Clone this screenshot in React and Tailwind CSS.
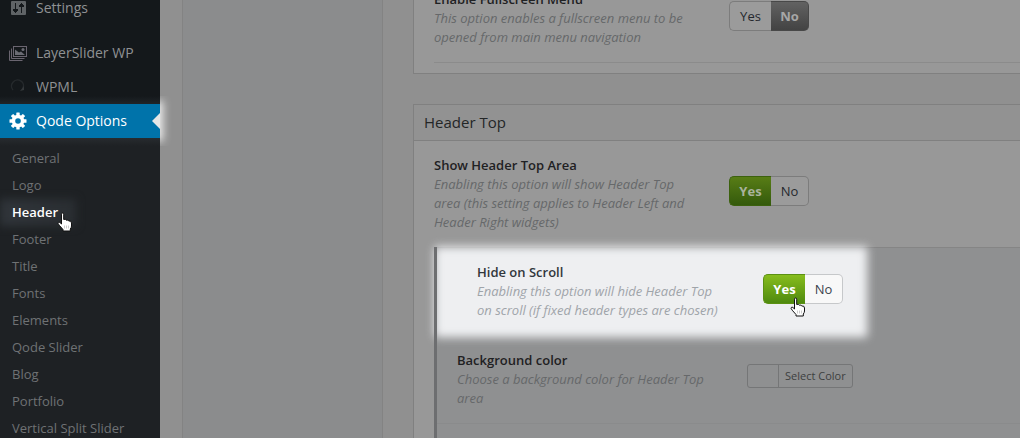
// src/App.jsx
import { useState } from 'react';

const SUB_ITEMS = [
  'General',
  'Logo',
  'Header',
  'Footer',
  'Title',
  'Fonts',
  'Elements',
  'Qode Slider',
  'Blog',
  'Portfolio',
  'Vertical Split Slider',
];

const SlidersIcon = () => (
  <svg width="18" height="18" viewBox="0 0 18 18" aria-hidden="true">
    <rect x="2" y="2" width="15" height="14" rx="1" fill="#5f6366" />
    <g fill="#14181b">
      <rect x="6" y="4" width="1" height="10" />
      <rect x="4" y="10" width="5" height="2" />
      <rect x="5" y="12" width="3" height="1" />
      <rect x="12" y="4" width="1" height="10" />
      <rect x="10" y="6" width="5" height="2" />
      <rect x="11" y="5" width="3" height="1" />
    </g>
  </svg>
);

const LayersIcon = () => (
  <svg width="18" height="18" viewBox="0 0 18 18" fill="none" stroke="#6a6570" aria-hidden="true">
    <rect x="4.5" y="2.5" width="13" height="10" />
    <path d="M2.500 4.500V14.500H15.500M.5 6.500V16.500H13.500" />
    <path d="M6 11V5.500L10 8.500L12 7.500L16 11Z" fill="#6a6b73" stroke="none" />
    <circle cx="14" cy="5.500" r="1.500" fill="#6a6b73" stroke="none" />
  </svg>
);

const WpmlIcon = () => (
  <svg width="18" height="18" viewBox="0 0 18 18" fill="none" aria-hidden="true">
    <path d="M4 12A6 6 0 1 1 14 10.500" stroke="#25292c" strokeWidth="1.500" />
    <path d="M11 13L15 8V12Z" fill="#34383b" />
  </svg>
);

const GearIcon = () => (
  <svg width="18" height="18" viewBox="0 0 18 18" aria-hidden="true">
    <g fill="#fff">
      <rect x="7.300" y="0.500" width="3.400" height="17" rx="0.500" />
      <rect x="7.300" y="0.500" width="3.400" height="17" rx="0.500" transform="rotate(45 9 9)" />
      <rect x="7.300" y="0.500" width="3.400" height="17" rx="0.500" transform="rotate(90 9 9)" />
      <rect x="7.300" y="0.500" width="3.400" height="17" rx="0.500" transform="rotate(135 9 9)" />
      <circle cx="9" cy="9" r="6.300" />
    </g>
    <circle cx="9" cy="9" r="2.800" fill="#0073aa" />
  </svg>
);

const HandCursor = ({ className }) => (
  <svg className={className} width="16" height="20" viewBox="0 0 16 20" aria-hidden="true">
    <path
      d="M4.500 12V2.200Q4.500 1 5.600 1T6.700 2.200V7.500Q8.800 6.700 9.200 8.200Q11.200 7.500 11.700 9Q14.500 8.500 14.500 11V14Q14.500 15.500 13.300 17V19H6V17.500L2.200 13.200Q.3 11 1.500 10.300T4.500 12Z"
      fill="#fff"
      stroke="#111"
    />
    <path d="M7.500 13.500V16.500M9.500 13.500V16.500M11.500 13.500V16.500" stroke="#ccc" />
  </svg>
);

const MENU = [
  { label: 'LayerSlider WP', Icon: LayersIcon },
  { label: 'WPML', Icon: WpmlIcon },
];

const MenuLink = ({ label, Icon }) => (
  <a href="#" className="flex h-[34px] items-center gap-[9px] pl-[9px] text-sm text-[#8f9193]">
    <Icon />
    {label}
  </a>
);

const Sidebar = () => (
  <nav className="relative z-10 w-40 shrink-0 bg-[#1e2124]">
    <div className="bg-[#14181b]">
      <div className="-mt-[9px] mb-[11px]">
        <MenuLink label="Settings" Icon={SlidersIcon} />
      </div>
      {MENU.map(item => (
        <MenuLink key={item.label} {...item} />
      ))}
    </div>

    {/* Active section, lit up */}
    <div className="relative">
      <div className="absolute -inset-y-2 inset-x-0 bg-linear-to-b from-transparent via-[#3a4045] to-transparent" />
      <div className="absolute -inset-y-2 left-full w-4 overflow-hidden py-2">
        <div className="-ml-2 h-full w-2 bg-white shadow-[0_0_8px_3px_#eee]" />
      </div>
      <a href="#" className="relative flex h-[34px] items-center gap-[9px] bg-[#0073aa] pl-[9px] text-sm text-white">
        <GearIcon />
        Qode Options
        <svg className="ml-auto" width="8" height="16" viewBox="0 0 8 16" aria-hidden="true">
          <path d="M8 0V16L0 8Z" fill="#e6e6e6" />
        </svg>
      </a>
    </div>

    <ul className="pt-[7px] text-[13px] leading-[27px]">
      {SUB_ITEMS.map(label => (
        <li key={label}>
          {label === 'Header' ? (
            <a href="#" className="relative block pl-3 font-semibold text-white">
              <span className="absolute inset-y-0 left-0 w-[76px] bg-linear-to-r from-[#30353a] to-[#2a2e32] blur-[4px]" />
              <span className="relative">{label}</span>
              <HandCursor className="absolute top-[13px] left-[57px]" />
            </a>
          ) : (
            <a href="#" className="block pl-3 text-[#6f7274]">{label}</a>
          )}
        </li>
      ))}
    </ul>
  </nav>
);

const YesNo = ({ name, initial, lit }) => {
  const [value, setValue] = useState(initial);
  const idle = lit
    ? 'border-[#c6c8ca] bg-[#f8f8f8] text-[#3c434e]'
    : 'border-[#7c7c7c] bg-[#9b9b9b] text-[#25282e]';
  const yesOn = lit
    ? 'border-[#5b9112] bg-linear-to-b from-[#87bd1c] to-[#4f8a0f] font-bold text-white'
    : 'border-[#3c610e] bg-linear-to-b from-[#587d16] to-[#345a0c] font-bold text-[#a9b39d]';
  const noOn = 'border-[#484848] bg-linear-to-b from-[#626262] to-[#434343] font-bold text-[#a6a6a6]';

  return (
    <div role="group" aria-label={name} className="flex h-[30px] text-[13px]">
      <button
        onClick={() => setValue('yes')}
        aria-pressed={value === 'yes'}
        className={`w-[42px] rounded-l-[5px] border border-r-0 pt-0.5 ${value === 'yes' ? yesOn : idle}`}
      >
        Yes
      </button>
      <button
        onClick={() => setValue('no')}
        aria-pressed={value === 'no'}
        className={`w-[38px] rounded-r-[5px] border border-l-0 pt-0.5 ${value === 'no' ? noOn : idle}`}
      >
        No
      </button>
    </div>
  );
};

const OptionText = ({ title, text, lit }) => (
  <div className="w-[252px] shrink-0 text-[13px] leading-[19px]">
    <h4 className={`font-semibold ${lit ? 'text-[#32373c]' : 'text-[#1f2123]'}`}>{title}</h4>
    <p className={`italic ${lit ? 'text-[#9fa4a9]' : 'text-[#66686a]'}`}>{text}</p>
  </div>
);

const App = () => (
  <div
    className="flex h-screen overflow-hidden bg-[#909090]"
    style={{ fontFamily: '"Open Sans", "Noto Sans", sans-serif' }}
  >
    <Sidebar />

    <div className="ml-[22px] w-[201px] shrink-0 border-x border-[#838383] bg-[#8b8c8d]" />

    <main className="ml-[30px] min-w-0 flex-1">
      {/* Tail of the previous panel */}
      <section className="border-b border-l border-[#808080] bg-[#989898] pb-[10px] pl-5">
        <div className="-mt-[10px] flex gap-[43px] border-b border-[#8b8b8b] pb-[15px]">
          <OptionText
            title="Enable Fullscreen Menu"
            text="This option enables a fullscreen menu to be opened from main menu navigation"
          />
          <div className="pt-[11px]">
            <YesNo name="Enable Fullscreen Menu" initial="no" />
          </div>
        </div>
      </section>

      <section className="mt-[30px] border-t border-l border-[#808080] bg-[#989898]">
        <h3 className="border-b border-[#808080] bg-[#929292] pl-2.5 text-[15px] leading-[35px] text-[#242627]">
          Header Top
        </h3>

        <div className="pl-5">
          <div className="flex gap-[43px] py-[15px]">
            <OptionText
              title="Show Header Top Area"
              text="Enabling this option will show Header Top area (this setting applies to Header Left and Header Right widgets)"
            />
            <div className="pt-5">
              <YesNo name="Show Header Top Area" initial="yes" />
            </div>
          </div>

          <div className="flex">
            <div className="relative z-10 w-[3px] bg-[#6d6e70]" />
            <div className="flex-1 border-t border-[#858585] bg-[#8f9091]">
              {/* Spotlit row */}
              <div className="relative flex gap-[34px] pt-[15px] pb-4 pl-10">
                <div className="absolute inset-y-0 -left-px w-[430px] bg-[#eeeff1] shadow-[0_0_4px_1px_#eeeff1] blur-[4px]" />
                <div className="relative">
                  <OptionText
                    lit
                    title="Hide on Scroll"
                    text="Enabling this option will hide Header Top on scroll (if fixed header types are chosen)"
                  />
                </div>
                <div className="relative pt-[11px]">
                  <YesNo lit name="Hide on Scroll" initial="yes" />
                  <HandCursor className="absolute top-[34px] left-[27px]" />
                </div>
              </div>

              <div className="flex gap-[38px] border-b border-[#8a8b8c] py-[15px] pl-5">
                <OptionText
                  title="Background color"
                  text="Choose a background color for Header Top area"
                />
                <div className="pt-[13px]">
                  <button className="flex h-6 rounded-[3px] border border-[#757677] text-[11px] text-[#3d3f40]">
                    <span className="h-full w-[30px]" />
                    <span className="flex h-full items-center border-l border-[#757677] px-1.5">Select Color</span>
                  </button>
                </div>
              </div>

              <div className="h-12" />
            </div>
          </div>
        </div>
      </section>
    </main>
  </div>
);

export default App;
